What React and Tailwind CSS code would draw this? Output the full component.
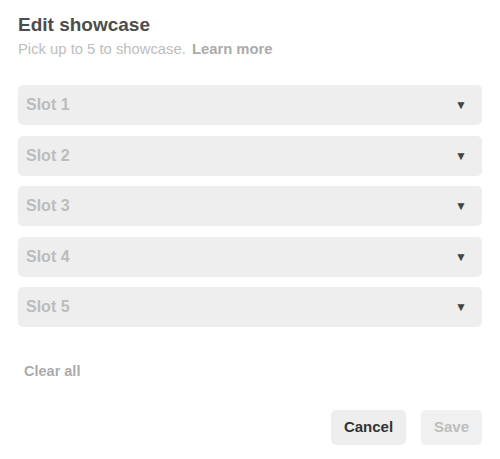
import { useState } from 'react'

export default function App() {
    const [slots] = useState(['Slot 1', 'Slot 2', 'Slot 3', 'Slot 4', 'Slot 5'])

    return (
        <div className="w-[500px] h-[459px] bg-white px-[18px] pt-[13px] font-['Liberation_Sans',Arial,sans-serif]">
            {/* Header */}
            <h2 className="text-[19px] leading-[24px] font-bold text-[#4d4d4d]">Edit showcase</h2>
            <p className="mt-[2px] text-[14.8px] leading-[20px] text-[#bdbdbd]">
                Pick up to 5 to showcase.{' '}
                <span className="ml-[2px] font-bold text-[#ababab]">Learn more</span>
            </p>

            {/* Slots */}
            <div className="mt-[26px] flex flex-col gap-[10.5px]">
                {slots.map((slot) => (
                    <button
                        key={slot}
                        className="flex items-center justify-between h-[40px] rounded-[5px] bg-[#eeeeee] pl-[8px] pr-[15px] text-left"
                    >
                        <span className="text-[16px] font-bold text-[#bcbcbc]">{slot}</span>
                        <span className="text-[12px] text-[#444444]">▼</span>
                    </button>
                ))}
            </div>

            <button className="mt-[34px] ml-[6px] text-[14.5px] font-bold text-[#ababab]">Clear all</button>

            {/* Footer */}
            <div className="mt-[27px] flex justify-end gap-[15px]">
                <button className="h-[35px] w-[75px] rounded-[5px] bg-[#eeeeee] text-[15px] font-bold text-[#333333]">
                    Cancel
                </button>
                <button className="h-[35px] w-[61px] rounded-[5px] bg-[#f0f0f0] text-[15px] font-bold text-[#bdbdbd]">
                    Save
                </button>
            </div>
        </div>
    )
}
